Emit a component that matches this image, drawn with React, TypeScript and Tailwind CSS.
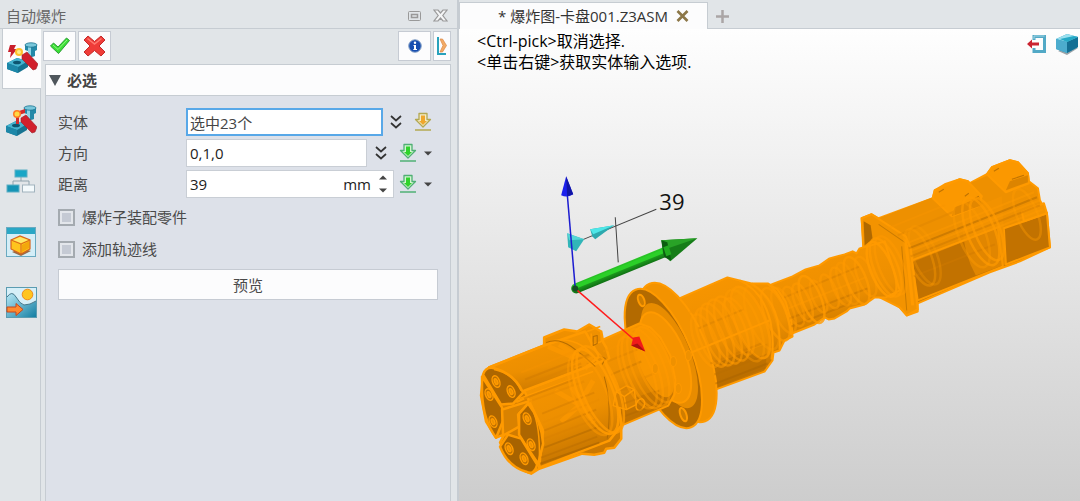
import React from 'react'

const UI_FONT = "font-['Open_Sans','Noto_Sans_CJK_SC',sans-serif]"

// ---------- toolbar + panel icons ----------

function MachineIcon({ variant }: { variant: 'bolt' | 'arm' }) {
  return (
    <svg width="32" height="32" viewBox="0 0 32 32" aria-hidden="true">
      <path d="M1 22 11 17 22 20 22 26 12 32 1 28Z" fill="#167391" />
      <path d="M1 22 11 17 22 20 12 26Z" fill="#45b3cf" />
      <path d="M1 22 12 26V32L1 28Z" fill="#1c87a8" />
      <ellipse cx="11" cy="21.5" rx="4" ry="1.8" fill="#0d5570" />
      <path d="M19 4h12v5l-2 1v5q-4 2-7 0v-5l-3-1Z" fill="#2589a8" />
      <path d="M22 6h3v9h-3Z" fill="#8ed6e8" />
      <ellipse cx="25" cy="4" rx="6" ry="2.2" fill="#79c7db" stroke="#1a7390" strokeWidth=".8" />
      {variant === 'bolt' ? (
        <>
          <path d="M4 4h6L8 8h3L4 17l1-6H2Z" fill="#c91f2b" />
          <circle cx="13" cy="11" r="4" fill="#ffc02c" />
          <circle cx="13" cy="11" r="2" fill="#ffec87" />
        </>
      ) : (
        <>
          <path d="M11 20V8l9-3v4l-6 2v9Z" fill="#d32a2c" />
          <circle cx="12" cy="10" r="4" fill="#ff7a24" />
          <circle cx="12" cy="10" r="2.5" fill="#ffd943" />
        </>
      )}
      <path d="m16 14 5-3 11 12-2 5-3 1-11-11Z" fill="#d1202c" stroke="#98212a" strokeWidth=".6" />
    </svg>
  )
}

function TreeIcon() {
  return (
    <svg width="30" height="26" viewBox="0 0 30 26" aria-hidden="true">
      <path d="M15 8v5M7 17v-4h16v4" fill="none" stroke="#8fa3ad" />
      <rect x="9" y="2" width="12" height="7" fill="#19a6c6" stroke="#5cafc4" />
      <rect x="1" y="17" width="12" height="7" fill="#1594b5" stroke="#5cafc4" />
      <rect x="16.5" y="17" width="12" height="7" fill="#f4fafc" stroke="#a1b3bd" />
    </svg>
  )
}

function BoxIcon() {
  return (
    <svg width="30" height="30" viewBox="0 0 30 30" aria-hidden="true">
      <rect x=".5" y=".5" width="29" height="29" fill="#d4eef7" stroke="#6aaac0" />
      <rect x="1" y="1" width="28" height="6" fill="#2aa7c5" />
      <path d="m6 25 9 4 10-5-10-3Z" fill="#9a6c45" />
      <path d="m5 13 9-4 10 4v9l-9 5-10-5Z" fill="#ffc51d" stroke="#d9641c" strokeWidth="1.2" />
      <path d="m7 13 7-3 8 3-7 3Z" fill="#ffe86a" />
      <path d="m16 18 7-4v7l-7 4Z" fill="#f3a80b" />
      <path d="m5 13 10 4v10M15 17l9-4" fill="none" stroke="#d9641c" />
    </svg>
  )
}

function SceneIcon() {
  return (
    <svg width="31" height="31" viewBox="0 0 31 31" aria-hidden="true">
      <defs>
        <linearGradient id="water" x1="0" y1="0" x2="1" y2="1">
          <stop offset="0" stopColor="#b6e7f5" />
          <stop offset="1" stopColor="#147fa3" />
        </linearGradient>
      </defs>
      <rect x=".5" y=".5" width="30" height="30" fill="#d6eff8" stroke="#5b9cb1" />
      <path d="M1 10Q6 3 10 10T18 18Q24 18 30 14V30H1Z" fill="url(#water)" />
      <path d="M1 10Q6 3 10 10T18 18Q24 18 30 14" fill="none" stroke="#45778a" />
      <circle cx="21.5" cy="7.5" r="5.3" fill="#ffc51f" stroke="#ef8a1a" />
      <path d="M1 20h9v-3.500l7 6-7 6V25H1Z" fill="#ff8a2d" stroke="#c5461e" />
    </svg>
  )
}

function CheckIcon() {
  return (
    <svg width="22" height="20" viewBox="0 0 22 20" aria-hidden="true">
      <path d="m1.500 10 3-3L9 11 17.500 2l3 2.500L9.500 17.500Z" fill="#3be036" stroke="#2a9a33" strokeWidth="1" strokeLinejoin="round" />
      <path d="m4 9 5 4.500 9-9.500" fill="none" stroke="#8df57d" strokeWidth="1" />
    </svg>
  )
}

function CrossIcon() {
  return (
    <svg width="23" height="22" viewBox="0 0 23 22" aria-hidden="true">
      <path d="m5 1 6.500 5.500L18 1l4 4-6 6 6 6-4 4-6.500-5.500L5 21l-4-4 6-6-6-6Z" fill="#ef3c38" stroke="#c42a2a" strokeWidth="1" strokeLinejoin="round" />
      <path d="m4.500 3.500 7 5.500 7-5.500" fill="none" stroke="#ff7a70" strokeWidth="1.500" />
    </svg>
  )
}

function InfoIcon() {
  return (
    <svg width="14" height="14" viewBox="0 0 14 14" aria-hidden="true">
      <circle cx="7" cy="7" r="6.300" fill="#174eb0" stroke="#8fa8c9" />
      <circle cx="7" cy="3.800" r="1.200" fill="#fff" />
      <path d="M5.500 6H8v4h1v1H5.300v-1H6V7h-.5Z" fill="#fff" />
    </svg>
  )
}

function ExpandIcon() {
  return (
    <svg width="12" height="20" viewBox="0 0 12 20" aria-hidden="true">
      <path d="M2 1v17h8" fill="none" stroke="#28a2bc" strokeWidth="2" />
      <path d="M4 3h2.500l4 6.500-4 6.500H4l3-6.500Z" fill="#f2ab66" stroke="#dd8742" strokeWidth=".7" />
    </svg>
  )
}

function ChevronsIcon() {
  return (
    <svg width="14" height="16" viewBox="0 0 14 16" fill="none" stroke="#333" strokeWidth="1.700" aria-hidden="true">
      <path d="m2 2 5 4.500L12 2M2 9l5 4.500L12 9" />
    </svg>
  )
}

function DownloadIcon({ tone }: { tone: 'amber' | 'green' }) {
  const [line, pale, core] = tone === 'amber' ? ['#b3a851', '#f3ecc8', '#efa72c'] : ['#4fb074', '#d3f5d0', '#2fd32b']
  return (
    <svg width="18" height="20" viewBox="0 0 18 20" aria-hidden="true">
      <path d="M5 1.500h8v6h3.500L9 15 1.500 7.500H5Z" fill={pale} stroke={line} strokeWidth="1.300" strokeLinejoin="round" />
      <path d="M7 3.500h4v5.500h2L9 13 5 9h2Z" fill={core} />
      <path d="M1 18h16" stroke={line} strokeWidth="1.500" />
    </svg>
  )
}

function Caret({ up }: { up?: boolean }) {
  return (
    <svg width="8" height="5" viewBox="0 0 8 5" aria-hidden="true">
      <path d={up ? 'M0 4.500h8L4 .5Z' : 'M0 .5h8L4 4.500Z'} fill="#444" />
    </svg>
  )
}

function ExitIcon() {
  return (
    <svg width="21" height="20" viewBox="0 0 21 20" aria-hidden="true">
      <path d="M8 6V2.500h10.500v15H8V14" fill="none" stroke="#52a9c6" strokeWidth="3" />
      <path d="M8 5V2h10.500" fill="none" stroke="#a3d6e5" />
      <path d="m1 10 5-4.500V8.500h7v3H6v3Z" fill="#cb2431" />
    </svg>
  )
}

function CubeIcon() {
  return (
    <svg width="24" height="22" viewBox="0 0 24 22" aria-hidden="true">
      <path d="m3 18 9 4 11-7-8-3Z" fill="#9ba3a8" />
      <path d="m1 6 11-5 11 3v10l-11 6-11-4Z" fill="#2b9cc0" />
      <path d="m1 6 11-5 11 3-11 5Z" fill="#9be0ef" />
      <path d="m1 6 11 3v11L1 16Z" fill="#4cacce" />
      <path d="m12 9 11-5v10l-11 6Z" fill="#146f94" />
      <path d="m5 6 14-3 4 1-11 5Z" fill="#25a9c6" />
    </svg>
  )
}

// ---------- 3D view ----------

type Ring = [x: number, y: number, r: number, opacity: number]

const AXIS_TILT = -22

const frontRings: Ring[] = [
  [591, 394, 43, 0.5], [596, 391, 45, 0.9], [601, 389, 46, 0.8],
  [638, 372, 38, 0.5], [643, 370, 40, 0.6], [649, 367, 41, 0.5], [655, 364, 40, 0.5],
]

const middleRings: Ring[] = [
  [706, 340, 28, 0.5], [712, 337, 31, 0.6], [718, 334, 33, 0.6], [725, 331, 34, 0.6],
  [732, 328, 34, 0.6], [739, 326, 30, 0.5], [745, 325, 38, 0.4], [751, 322, 38, 0.6],
  [762, 317, 34, 0.4],
]

const shaftRings: Ring[] = [
  [776, 314, 28, 0.7], [784, 310, 24, 0.5], [794, 306, 21, 0.5], [803, 302, 20, 0.6],
  [812, 299, 25, 0.8], [819, 296, 17, 0.5], [830, 291, 18, 0.5], [841, 286, 20, 0.5],
  [848, 283, 22, 0.4], [857, 280, 25, 0.7], [866, 276, 21, 0.5],
]

const motorRings: Ring[] = [
  [882, 269, 29, 0.9], [886, 267, 31, 0.7], [891, 265, 31, 0.5],
  [920, 257, 30, 0.4], [925, 255, 31, 0.3], [972, 234, 35, 0.4], [981, 231, 36, 0.7],
  [987, 229, 33, 0.7], [1027, 214, 27, 0.4],
]

const screws = [
  [497, 381], [512, 391], [490, 394], [494, 421], [528, 418], [532, 444], [510, 448], [525, 458],
]

// [x1, y1, x2, y2, colour]
const streaks: [number, number, number, number, string][] = [
  [522, 372, 580, 349, '#f59300'], [526, 379, 590, 354, '#cf7900'], [526, 385, 582, 363, '#dc8200'],
  [525, 398, 575, 379, '#c77500'], [530, 401, 585, 381, '#e58900'], [543, 413, 595, 392, '#d17b00'],
  [544, 422, 600, 399, '#e98c00'], [545, 430, 597, 409, '#c87500'], [545, 438, 598, 418, '#da8100'],
  [545, 447, 600, 426, '#a96400'], [542, 457, 598, 436, '#b86c00'], [541, 463, 600, 442, '#9c5c00'],
  [604, 351, 636, 338, '#f79500'], [608, 361, 638, 349, '#de8400'], [612, 374, 642, 361, '#c87600'],
  [618, 388, 655, 373, '#e48800'], [622, 404, 660, 390, '#c77500'], [624, 416, 662, 402, '#b06800'],
  [690, 312, 738, 293, '#f49200'], [699, 328, 744, 309, '#d78000'], [706, 346, 752, 327, '#f29100'],
  [711, 363, 762, 343, '#cd7800'], [715, 374, 768, 354, '#b96d00'], [716, 383, 768, 363, '#a86300'],
  [785, 297, 860, 266, '#d17b00'], [789, 308, 866, 277, '#ff9a00'], [790, 318, 868, 288, '#bf7000'],
  [792, 326, 848, 304, '#b86c00'], [888, 228, 945, 205, '#f89500'], [898, 235, 955, 211, '#df8500'],
  [907, 243, 1034, 192, '#ff9a00'], [909, 248, 1037, 197, '#a96400'], [910, 251, 1040, 200, '#ff9a00'],
  [911, 256, 1040, 205, '#c97600'], [912, 261, 1043, 209, '#ff9a00'], [914, 276, 995, 244, '#d07a00'],
]

function Rings({ items }: { items: Ring[] }) {
  return (
    <g fill="none" stroke="#ff9a00" strokeWidth="2.500">
      {items.map(([x, y, r, opacity], i) => (
        <ellipse key={i} cx={x} cy={y} rx={r * 0.38} ry={r} opacity={opacity} transform={`rotate(${AXIS_TILT} ${x} ${y})`} />
      ))}
    </g>
  )
}

function Assembly() {
  return (
    <g strokeLinejoin="round">
      {/* motor */}
      <g stroke="#ff9a00" strokeWidth="2">
        <path d="M862 218 872 214 879 218 933 198 935 190 945 184 960 179 968 181 970 183 987 174 992 167 1010 160 1018 162 1028 173 1029 181 1038 188 1040 200 1047 213 1050 247 1020 261 990 272 918 303 918 311 907 315 900 307 886 297 865 294 864 246Z" fill="url(#steel)" />
        <path d="M879 218 990 175 1038 194 908 244Z" fill="#ee9000" stroke="none" />
        <path d="M912 260 998 227 1003 266 918 300Z" fill="#c27200" />
        <path d="M1004 228 1047 213 1050 247 1006 264Z" fill="#c27200" />
        <path d="m962 212 40-16 4 68-30 11q-14-24-14-63Z" fill="#f59400" stroke="none" opacity=".6" />
        <path d="M935 190 960 179 968 181 982 196 978 206 952 216 933 198Z" fill="#fb9800" />
        <path d="m952 216 3-9 25-10 2 8Z" fill="#e28700" stroke="none" />
        <path d="m939 192 5-3M965 196l4-3M972 200l7-4" fill="none" stroke="#bf7200" strokeWidth="1" />
        <path d="M992 167 1010 160 1018 162 1028 173 1029 183 1006 192 987 174Z" fill="#fb9800" />
        <path d="m1006 190 4-9 18-6v7Z" fill="#dc8400" stroke="none" />
        <path d="m994 171 5-3M1012 179l12-4" fill="none" stroke="#bf7200" strokeWidth="1" />
        <path d="m1022 212 22-9 3 10-23 8Z" fill="#f49400" />
      </g>
      {/* motor mounting plate */}
      <path d="M862 218 872 214 906 236 911 248 918 309 907 315 900 307 866 290Z" fill="#f39300" stroke="#ff9a00" strokeWidth="2" />
      <path d="m864 221 7 4 2 14-8 6Z" fill="#b06900" />
      <path d="m879 224 29 20M902 246l5 64" fill="none" stroke="#c97a00" />
      <path d="m906 239 7 66" fill="none" stroke="#ff9a00" strokeWidth="3" />

      {/* ball screw shaft */}
      <path d="M760 285 772 284 793 276 806 269 820 265 830 258 845 254 853 251 857 253 860 248 868 246 885 241 900 290 886 297 875 297 865 304 850 308 847 311 835 318 829 319 825 317 815 324 790 334 775 350Z" fill="url(#steel)" stroke="#ff9a00" strokeWidth="2" />

      {/* middle housing */}
      <path d="M680 298 728 277 740 280 752 283 768 283 778 289 786 301 792 322 793 336 785 340 780 350 774 352 773 360 765 371 716 389Z" fill="url(#steel)" stroke="#ff9a00" strokeWidth="2" />
      <path d="M711 365 768 343 766 368 717 387Z" fill="#b66c00" opacity=".65" />
      <ellipse cx="752" cy="322" rx="15" ry="39" fill="#f99700" opacity=".6" transform={`rotate(${AXIS_TILT} 752 322)`} />
      <path d="M740 280q23 10 31 41 4 20 1 38M752 283q21 14 26 37 3 15 2 29M768 283q19 15 24 52" fill="none" stroke="#ff9a00" strokeWidth="2" />

      {/* flange */}
      <g stroke="#ff9a00" strokeWidth="2">
        <ellipse cx="678" cy="352" rx="30" ry="74" fill="#f39300" transform={`rotate(${AXIS_TILT} 678 352)`} />
        <ellipse cx="664" cy="358" rx="29" ry="74" fill="#b36a00" transform={`rotate(${AXIS_TILT} 664 358)`} />
        <ellipse cx="642" cy="300" rx="3" ry="6" fill="#cf7d00" transform="rotate(-20 642 300)" />
        <ellipse cx="684" cy="414" rx="3" ry="7" fill="#cf7d00" transform="rotate(-20 684 414)" />
      </g>
      <ellipse cx="670" cy="355" rx="21" ry="56" fill="#e88c00" transform={`rotate(${AXIS_TILT} 670 355)`} />
      <ellipse cx="666" cy="357" rx="20" ry="48" fill="#f59400" stroke="#ff9a00" strokeWidth="2" transform={`rotate(${AXIS_TILT} 666 357)`} />

      {/* front cylinder */}
      <path d="M586 347 640 323 651 327 661 337 671 355 676 379 675 394 669 405 622 425Z" fill="url(#steel)" stroke="#ff9a00" strokeWidth="2" />
      <path d="m620 403 50-18 2 8-5 11-45 18Z" fill="#be7000" opacity=".65" />
      <ellipse cx="655" cy="361" rx="15" ry="38" fill="#fb9800" opacity=".8" transform={`rotate(${AXIS_TILT} 655 361)`} />

      {/* chuck jaws */}
      <g stroke="#ff9a00" strokeWidth="2.500">
        <path d="M490 367 545 345 545 337 555 333 565 329 578 331 590 324 602 331 604 342 607 347 610 358 604 365 610 373 617 389 622 423 622 438 615 447 607 448 605 452 595 454 583 453 540 468 532 473 521 468 507 453 501 442 505 434 497 437 487 421 482 395 484 376Z" fill="url(#jaw)" />
        <path d="M490 367 545 345 586 331 600 356 580 372 518 401 502 382Z" fill="url(#steel)" />
        <path d="M525 390 605 360 618 390 622 425 610 440 540 467 544 430Z" fill="url(#steel)" />
        <path d="M484 374Q487 365 496 368 515 373 524 392L514 403 502 404Z" fill="#ad6600" />
        <path d="M483 376 503 407 504 420 497 437Q484 420 483 392Z" fill="#ad6600" />
        <path d="M503 409 532 400 519 414 520 426 504 435Z" fill="#d98200" />
        <path d="M520 413 529 403Q542 419 544 443L539 463 525 442 520 434Z" fill="#ad6600" />
        <path d="M501 446 509 434 522 438 538 464Q535 475 527 471 509 466 501 446Z" fill="#a76300" />
      </g>
      <g fill="none" stroke="#ff9a00" strokeWidth="5" opacity=".6">
        <path d="m549 346 28 12 12 10M560 344l25 16M556 390l24 14 14-24M562 421l18-16 15 17M572 386l20 26M574 366l20-8" />
      </g>
      <g fill="none" stroke="#ff9a00" strokeWidth="1.500">
        <path d="M495 369Q514 373 522 390M531 404Q542 423 540 463M547 342Q580 332 600 363M588 331 601 326M592 333v12l10-4v-10" />
        <path d="M520 398 594 371M524 391 594 364" />
        <path d="m617 391 10-6 8 4 2 15-10 5-13-4ZM617 391l8 5 10-7M625 396l2 12" fill="#d98100" />
        <ellipse cx="641" cy="404" rx="4" ry="6" transform="rotate(20 641 404)" />
      </g>
      <g fill="none" stroke="#b56c00" strokeWidth="1">
        <path d="M547 342q12-5 25 4t24 20M594 336l4-1v8l-4 2ZM600 355l6 3-3 6M605 376q8 28 3 62" />
      </g>
      <g strokeWidth="2" opacity=".45">
        {streaks.map(([x1, y1, x2, y2, stroke], i) => (
          <line key={i} x1={x1} y1={y1} x2={x2} y2={y2} stroke={stroke} />
        ))}
      </g>
      <g stroke="#ff9a00" strokeWidth="1.500" fill="#bd7000">
        {screws.map(([x, y]) => (
          <g key={`${x}-${y}`} transform={`rotate(${AXIS_TILT} ${x} ${y})`}>
            <ellipse cx={x} cy={y} rx="3.500" ry="6" />
            <ellipse cx={x} cy={y} rx="1.500" ry="3" fill="#ed9000" />
          </g>
        ))}
      </g>
      <Rings items={frontRings} />
      <Rings items={middleRings} />
      <Rings items={shaftRings} />
      <Rings items={motorRings} />
      <path d="M692 352 770 320" stroke="#ff9a00" strokeWidth="2" />
      {[[674, 361], [679, 388], [689, 355], [656, 368]].map(([x, y]) => (
        <ellipse key={x} cx={x} cy={y} rx="3" ry="5" fill="#ef9100" stroke="#ff9a00" />
      ))}
    </g>
  )
}

function Manipulator() {
  return (
    <g>
      <g stroke="#444">
        <path d="M577 242 657 209" />
        <path d="m616 217 3 45" />
      </g>
      <path d="m568 233 17 6-8 12-8-4Z" fill="#31b5b8" />
      <path d="m568 233 17 6-15 1Z" fill="#54d6d6" />
      <path d="m591 229 24-4-19 14-3-3Z" fill="#2da9ae" />
      <path d="m591 229 24-4-21 9Z" fill="#4ee7e8" />
      <path d="M577 288 672 249" stroke="url(#rod)" strokeWidth="10" strokeLinecap="round" />
      <path d="M577 286 671 248" stroke="#2bd028" strokeWidth="4" />
      <path d="m662 240 36-2-27 23-7-6Z" fill="#167d18" />
      <path d="m662 240 36-2-32 11Z" fill="#29a327" />
      <path d="m662 240 6 2 4 18-7-3Z" fill="#0c5e10" />
      <path d="m664 247 5-2 3 9-5 2Z" fill="#22ac20" />
      <path d="m576 287-8-94" stroke="#1b1bd0" strokeWidth="1.500" />
      <path d="m567 176 7 18q-6 4-12 1Z" fill="#1c20ed" />
      <path d="m567 176 7 18-6 2Z" fill="#1115a5" />
      <path d="m577 289 61 53" stroke="#ff1c1c" strokeWidth="1.500" />
      <path d="m634 337 6-1 6 15-14-6Z" fill="#f11a1a" />
      <path d="m638 343 8 8-14-6Z" fill="#ad1010" />
      <circle cx="576" cy="288" r="3" fill="#164f24" />
      <text x="660" y="210" fontSize="22" fill="#111" className={UI_FONT}>39</text>
    </g>
  )
}

function Scene() {
  return (
    <svg viewBox="460 29 620 472" preserveAspectRatio="xMinYMin meet" className="block w-full" role="img" aria-label="卡盘001">
      <defs>
        <linearGradient id="steel" x1=".35" y1="0" x2=".65" y2="1">
          <stop offset="0" stopColor="#f79500" />
          <stop offset=".5" stopColor="#ed8f00" />
          <stop offset="1" stopColor="#b86c00" />
        </linearGradient>
        <linearGradient id="jaw" x1="0" y1="0" x2="0" y2="1">
          <stop offset="0" stopColor="#f29200" />
          <stop offset="1" stopColor="#c47300" />
        </linearGradient>
        <linearGradient id="rod" gradientUnits="userSpaceOnUse" x1="622" y1="264" x2="626" y2="274">
          <stop offset="0" stopColor="#2bc928" />
          <stop offset="1" stopColor="#0e6b12" />
        </linearGradient>
      </defs>
      <Assembly />
      <Manipulator />
    </svg>
  )
}

// ---------- panel ----------

const sideTabs = [
  { name: '自动爆炸', icon: <MachineIcon variant="bolt" /> },
  { name: '手动爆炸', icon: <MachineIcon variant="arm" /> },
  { name: '结构', icon: <TreeIcon /> },
  { name: '视图', icon: <BoxIcon /> },
  { name: '场景', icon: <SceneIcon /> },
]

const toolButton = 'flex h-[30px] items-center justify-center border border-[#c6cbd3] bg-[#fcfcfd]'
const field = 'h-7 min-w-0 flex-1 border border-[#c9ced5] bg-white px-[3px] text-[15px] text-[#222] outline-none'

function Row({ id, label, children }: { id: string; label: string; children: React.ReactNode }) {
  return (
    <div className="flex h-7 items-center">
      <label htmlFor={id} className="w-32 shrink-0">{label}</label>
      {children}
    </div>
  )
}

function Check({ id, label }: { id: string; label: string }) {
  return (
    <div className="flex h-8 items-center gap-[7px]">
      <input id={id} type="checkbox" className="size-[17px] appearance-none border-2 border-[#a4aab0] bg-[#c5cad4] shadow-[inset_0_0_0_2px_#e3e6eb] checked:bg-[#4a5a70]" />
      <label htmlFor={id}>{label}</label>
    </div>
  )
}

function ExplodePanel() {
  return (
    <aside className="flex w-[459px] shrink-0 flex-col border-r-2 border-[#c6ccd2] bg-[#e1e5e8]">
      <header className="flex h-7 items-center justify-between pt-[3px] pr-[9px] pl-1.5">
        <h1 className="text-[15px] leading-5 text-[#666]">自动爆炸</h1>
        <div className="flex items-center gap-3">
          <button type="button" aria-label="停靠">
            <svg width="13" height="10" viewBox="0 0 13 10" fill="none" stroke="#999"><rect x=".5" y=".5" width="12" height="9" rx="1" /><rect x="3.500" y="3.500" width="6" height="3" strokeWidth="1.500" /></svg>
          </button>
          <button type="button" aria-label="关闭">
            <svg width="15" height="13" viewBox="0 0 15 13"><path d="m1 1h4l2.500 3L10 1h4L9.800 6.500 14 12h-4L7.500 9 5 12H1l4.200-5.500Z" fill="#f4f5f6" stroke="#999" strokeWidth="1.200" /></svg>
          </button>
        </div>
      </header>
      <div className="flex flex-1 border-t border-[#c6ccd2]">
        <nav className="flex w-[41px] shrink-0 flex-col border-r border-[#c6ccd2] pl-0.5">
          {sideTabs.map((tab, i) => (
            <button key={tab.name} type="button" aria-label={tab.name} className={i === 0 ? '-mr-px flex h-[60px] items-center justify-center border-b border-l border-[#c6ccd2] bg-[#fcfcfd] pb-1' : 'flex h-[61px] items-center justify-center'}>
              {tab.icon}
            </button>
          ))}
        </nav>
        <div className="flex min-w-0 flex-1 flex-col pt-0.5 pr-[6px] pl-[2px]">
          <div className="flex gap-[2px]">
            <button type="button" aria-label="确定" className={`${toolButton} w-[33px]`}><CheckIcon /></button>
            <button type="button" aria-label="取消" className={`${toolButton} w-[33px]`}><CrossIcon /></button>
            <button type="button" aria-label="信息" className={`${toolButton} ml-auto w-[33px]`}><InfoIcon /></button>
            <button type="button" aria-label="展开" className={`${toolButton} w-[18px]`}><ExpandIcon /></button>
          </div>
          <section className="mt-[3px] ml-[2px] flex flex-1 flex-col border-x border-t border-[#c6ccd2] bg-[#dde1e9] text-[15px] leading-5 text-[#4a4a4a]">
            <h2 className="border-b border-[#c6ccd2] bg-[#fcfcfd]">
              <button type="button" className="flex h-[30px] w-full items-center gap-1.5 pl-[3px] font-bold text-[#444]">
                <svg width="12" height="11" viewBox="0 0 12 11" aria-hidden="true"><path d="M0 0h12L6 11Z" fill="#4f565c" /></svg>
                必选
              </button>
            </h2>
            <form className="flex flex-col pt-3 pr-3 pl-3" onSubmit={(e) => e.preventDefault()}>
              <div className="flex flex-col gap-[3px]">
                <Row id="entity" label="实体">
                  <input id="entity" defaultValue="选中23个" className="h-7 min-w-0 flex-1 border-2 border-[#58a8e8] bg-white px-[2px] text-[15px] text-[#444] outline-none" />
                  <div className="flex w-[55px] shrink-0 items-center justify-end gap-[11px] pr-1.5">
                    <button type="button" aria-label="更多"><ChevronsIcon /></button>
                    <button type="button" aria-label="拾取实体"><DownloadIcon tone="amber" /></button>
                  </div>
                </Row>
                <Row id="direction" label="方向">
                  <input id="direction" defaultValue="0,1,0" className={field} />
                  <div className="flex w-[71px] shrink-0 items-center justify-end pr-1.5">
                    <button type="button" aria-label="更多" className="mr-[11px]"><ChevronsIcon /></button>
                    <button type="button" aria-label="拾取方向"><DownloadIcon tone="green" /></button>
                    <button type="button" aria-label="方向选项" className="ml-[7px]"><Caret /></button>
                  </div>
                </Row>
                <Row id="distance" label="距离">
                  <div className="flex h-7 min-w-0 flex-1 items-center border border-[#c9ced5] bg-white pr-1.5 pl-[3px] text-[#222]">
                    <input id="distance" defaultValue="39" className="min-w-0 flex-1 outline-none" />
                    <span>mm</span>
                    <div className="ml-2 flex flex-col gap-2">
                      <button type="button" aria-label="增加" className="flex"><Caret up /></button>
                      <button type="button" aria-label="减少" className="flex"><Caret /></button>
                    </div>
                  </div>
                  <div className="flex w-11 shrink-0 items-center justify-end gap-[7px] pr-1.5">
                    <button type="button" aria-label="拾取距离"><DownloadIcon tone="green" /></button>
                    <button type="button" aria-label="距离选项"><Caret /></button>
                  </div>
                </Row>
              </div>
              <div className="mt-[3px] mb-1">
                <Check id="sub" label="爆炸子装配零件" />
                <Check id="trail" label="添加轨迹线" />
              </div>
              <button type="submit" className="h-[31px] border border-[#c6cbd3] bg-[#fcfcfd]">预览</button>
            </form>
          </section>
        </div>
      </div>
    </aside>
  )
}

function Viewport() {
  return (
    <main className="flex min-w-0 flex-1 flex-col">
      <div className="flex h-[29px] items-end border-b border-[#c6ccd2] bg-[#e1e5e8]">
        <div className="-mb-px flex h-[27px] items-center gap-2 border-x border-t border-[#c6ccd2] bg-[#fcfcfd] pr-[18px] pl-[38px]">
          <span className="text-[15px] leading-5 whitespace-nowrap text-[#333]">* 爆炸图-卡盘001.Z3ASM</span>
          <button type="button" aria-label="关闭标签">
            <svg width="13" height="12" viewBox="0 0 13 12"><path d="m1.500 1 10 10M11.500 1l-10 10" stroke="#8c7748" strokeWidth="2.700" /></svg>
          </button>
        </div>
        <button type="button" aria-label="新建标签" className="flex h-full items-center pt-1 pl-2">
          <svg width="13" height="13" viewBox="0 0 13 13"><path d="M6.500 0v13M0 6.500h13" stroke="#aaa5a5" strokeWidth="2.500" /></svg>
        </button>
      </div>
      <div className="relative flex-1 bg-linear-to-b from-[#fefefe] to-[#cdcdcd]">
        <Scene />
        <div className="absolute inset-x-0 top-0 flex items-start justify-between pt-[2px] pr-px pl-[18px]">
          <p className="text-[16px] leading-[21px] text-black">
            &lt;Ctrl-pick&gt;取消选择.
            <br />
            &lt;单击右键&gt;获取实体输入选项.
          </p>
          <div className="flex gap-2 pt-[2px]">
            <button type="button" aria-label="退出"><ExitIcon /></button>
            <button type="button" aria-label="视图方向"><CubeIcon /></button>
          </div>
        </div>
      </div>
    </main>
  )
}

export default function App() {
  return (
    <div className={`flex min-h-screen ${UI_FONT}`}>
      <ExplodePanel />
      <Viewport />
    </div>
  )
}
